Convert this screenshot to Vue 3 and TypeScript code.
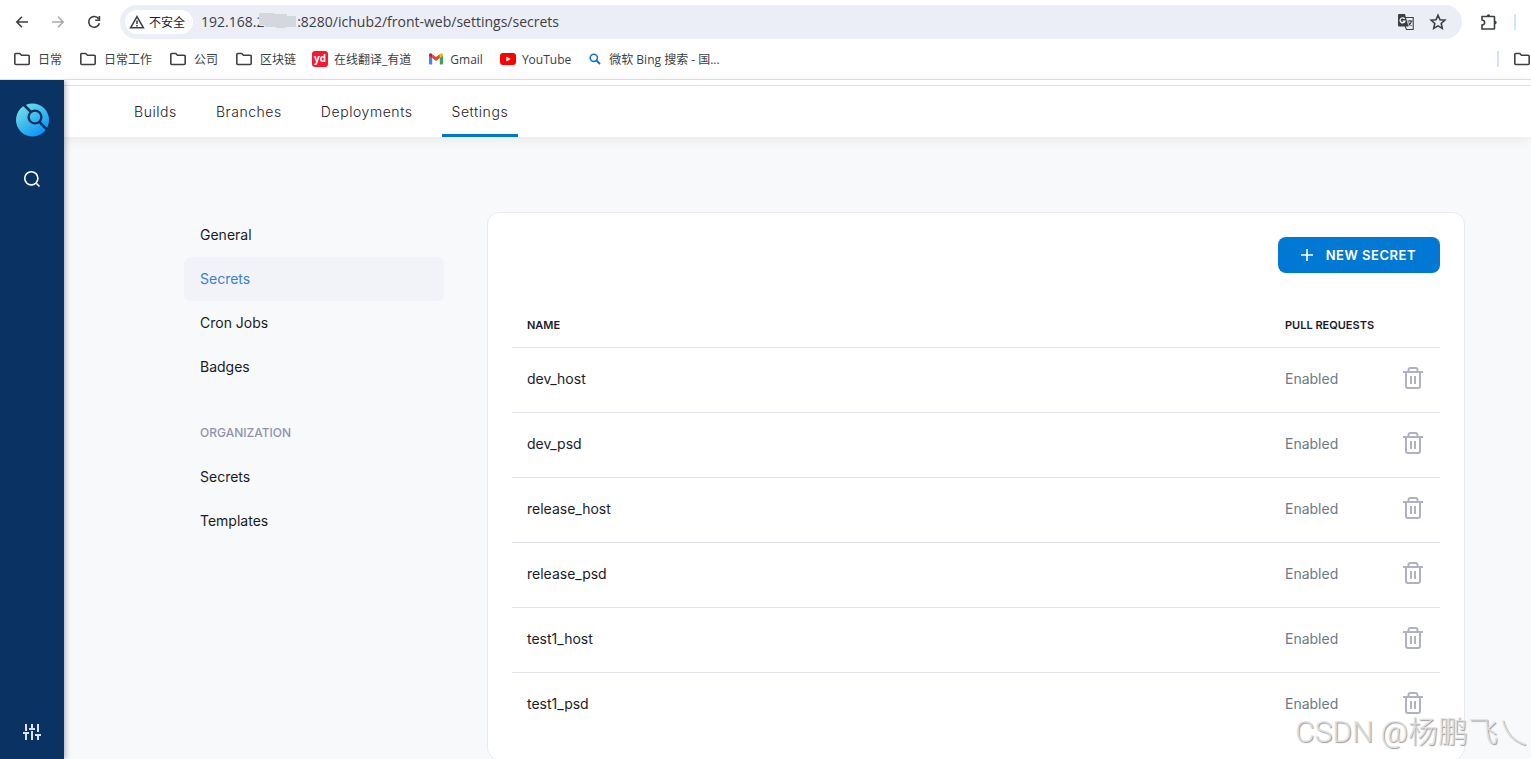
<script setup lang="ts">
import { ref } from 'vue'

interface Bookmark {
  label: string
  icon: 'folder' | 'yd' | 'gmail' | 'youtube' | 'search'
}

const address = ref('192.168.2\u00a0\u00a0\u00a0\u00a0\u00a0\u00a0\u00a0\u00a0\u00a0:8280/ichub2/front-web/settings/secrets')

const bookmarks: Bookmark[] = [
  { label: '日常', icon: 'folder' },
  { label: '日常工作', icon: 'folder' },
  { label: '公司', icon: 'folder' },
  { label: '区块链', icon: 'folder' },
  { label: '在线翻译_有道', icon: 'yd' },
  { label: 'Gmail', icon: 'gmail' },
  { label: 'YouTube', icon: 'youtube' },
  { label: '微软 Bing 搜索 - 国...', icon: 'search' },
]

const tabs = ['Builds', 'Branches', 'Deployments', 'Settings']
const activeTab = ref('Settings')

const repoLinks = ['General', 'Secrets', 'Cron Jobs', 'Badges']
const orgLinks = ['Secrets', 'Templates']
const activeLink = ref('Secrets')

const secrets = ['dev_host', 'dev_psd', 'release_host', 'release_psd', 'test1_host', 'test1_psd']
</script>

<template>
  <div class="window">
    <header class="chrome">
      <div class="toolbar">
        <button class="tool" type="button" aria-label="Back">
          <svg width="16" height="16" viewBox="0 0 16 16"><path d="M14 8H3M8 2.8 2.8 8 8 13.2" /></svg>
        </button>
        <button class="tool dim" type="button" aria-label="Forward">
          <svg width="16" height="16" viewBox="0 0 16 16"><path d="M2 8h11M8 2.8 13.2 8 8 13.2" /></svg>
        </button>
        <button class="tool" type="button" aria-label="Reload">
          <svg width="16" height="16" viewBox="0 0 16 16"><path d="M12.6 4.8A5.4 5.4 0 1 0 13.4 9.2M13.4 2v4.200H9.200" /></svg>
        </button>
        <div class="omnibox">
          <button class="site-chip" type="button">
            <svg width="16" height="14" viewBox="0 0 16 14"><path d="M8 1.700 14.300 12.700H1.700Z" /><path d="M8 5.500v3.500M8 10v1.500" /></svg>
            不安全
          </button>
          <div class="address">
            <input v-model="address" aria-label="Address" type="text" spellcheck="false" />
            <svg class="mask" width="38" height="15" viewBox="0 0 38 15"><path d="M0 0h15v1h13v2h9v11H27v1H17v-1H6v-2H0Z" fill="#d5d7de" /></svg>
          </div>
          <button class="tool small" type="button" aria-label="Translate">
            <svg width="18" height="18" viewBox="0 0 18 18">
              <path d="M8 4.500h8.200v12H9.500L8 13" class="thin" />
              <path d="M2 1h6l3.500 12.500H2a1 1 0 0 1-1-1V2a1 1 0 0 1 1-1Z" class="solid" />
              <path d="M7.600 5.800a2.500 2.500 0 1 0 .3 2.400H5.600" class="light" />
              <path d="M10.500 8h5M13 7v1M14.500 8c-.5 2-1.500 3.500-3 4.500M11.500 9.500l3 3.500" class="thin" />
            </svg>
          </button>
          <button class="tool small" type="button" aria-label="Bookmark this page">
            <svg width="18" height="18" viewBox="0 0 18 18"><path d="m9 2.200 2 4.500 4.900.5-3.700 3.300 1.100 4.900L9 12.900l-4.300 2.500 1.100-4.900L2.100 7.200 7 6.700Z" /></svg>
          </button>
        </div>
        <button class="tool extensions" type="button" aria-label="Extensions">
          <svg width="18" height="18" viewBox="0 0 18 18"><path d="M2 3.500h12a.5.5 0 0 1 .5.5v11.500a.5.5 0 0 1-.5.5H2v-4c3.500-.5 3.500-4.500 0-5Z" /><path d="M6.800 3a1.700 1.700 0 0 1 3.400 0ZM15 7.800a1.700 1.700 0 0 1 0 3.400Z" class="solid" /></svg>
        </button>
        <span class="divider"></span>
      </div>
      <nav class="bookmarks" aria-label="Bookmarks">
        <a v-for="b in bookmarks" :key="b.label" href="#" :class="['bookmark', b.icon]">
          <svg v-if="b.icon === 'folder'" class="folder-icon" width="16" height="14" viewBox="0 0 16 14"><path d="M1.800 1.500h4l1.700 1.700h6.700a1 1 0 0 1 1 1v7.300a1 1 0 0 1-1 1H1.800a1 1 0 0 1-1-1v-9a1 1 0 0 1 1-1Z" /></svg>
          <span v-else-if="b.icon === 'yd'" class="yd-icon">yd</span>
          <svg v-else-if="b.icon === 'gmail'" width="14" height="12" viewBox="0 0 14 12">
            <path d="M0 2v8.500a1 1 0 0 0 1 1h2.200V4.500Z" fill="#4285f4" />
            <path d="M14 2v8.500a1 1 0 0 1-1 1h-2.200V4.500Z" fill="#34a853" />
            <path d="M10.800 1.200V5L14 2.700V1.900c0-1.500-1.600-2-2.600-1.200Z" fill="#fbbc04" />
            <path d="M3.200 1.200 7 4.100l3.800-2.900V5L7 7.900 3.200 5Z" fill="#ea4335" />
            <path d="M3.200 1.200V5L0 2.700V1.900C0 .4 1.600-.1 2.600.7Z" fill="#c5221f" />
          </svg>
          <svg v-else-if="b.icon === 'youtube'" width="16" height="12" viewBox="0 0 16 12"><rect width="16" height="12" rx="3" fill="#f00" /><path d="m6.300 3.400 4.400 2.600-4.400 2.600Z" fill="#fff" /></svg>
          <svg v-else width="12" height="12" viewBox="0 0 12 12"><circle cx="4.800" cy="4.800" r="3.600" fill="none" stroke="#1b74c8" stroke-width="1.600" /><path d="m7.500 7.500 3.500 3.500" stroke="#1b74c8" stroke-width="2" /></svg>
          <span>{{ b.label }}</span>
        </a>
        <span class="divider end"></span>
        <button class="tool all" type="button" aria-label="All bookmarks">
          <svg width="16" height="14" viewBox="0 0 16 14"><path d="M1.800 1.500h4l1.700 1.700h6.700a1 1 0 0 1 1 1v7.300a1 1 0 0 1-1 1H1.800a1 1 0 0 1-1-1v-9a1 1 0 0 1 1-1Z" /></svg>
        </button>
      </nav>
    </header>

    <div class="app">
      <aside class="rail">
        <a href="#" class="logo" aria-label="Home">
          <svg width="34" height="34" viewBox="0 0 34 34">
            <defs>
              <linearGradient id="logo-fill" x1="0.15" y1="0.1" x2="0.75" y2="0.95">
                <stop offset="0" stop-color="#6fdde6" />
                <stop offset="1" stop-color="#0b94f7" />
              </linearGradient>
            </defs>
            <circle cx="17.500" cy="17" r="16.500" fill="url(#logo-fill)" />
            <path d="m8 1 8 8M24.500 19l9 9" stroke="#0a3364" stroke-width="2.600" />
            <circle cx="20" cy="14" r="6.400" fill="none" stroke="#0a3364" stroke-width="2.400" />
          </svg>
        </a>
        <button type="button" aria-label="Search" class="rail-button">
          <svg width="18" height="18" viewBox="0 0 18 18"><circle cx="8.300" cy="8.300" r="6.600" /><path d="m13 13 3.500 3.500" /></svg>
        </button>
        <button type="button" aria-label="Preferences" class="rail-button bottom">
          <svg width="18" height="18" viewBox="0 0 18 18"><path d="M3 1v7M3 11v6M0 10h6M9 1v4M9 8v9M6 6h6M15 1v8M15 12v5M12 12h6" /></svg>
        </button>
      </aside>

      <main class="content">
        <nav class="tabs" aria-label="Repository">
          <a v-for="t in tabs" :key="t" href="#" :class="['tab', { active: t === activeTab }]" @click.prevent="activeTab = t">{{ t }}</a>
        </nav>

        <div class="settings">
          <nav class="side" aria-label="Settings">
            <a v-for="l in repoLinks" :key="l" href="#" :class="['side-link', { active: l === activeLink }]" @click.prevent="activeLink = l">{{ l }}</a>
            <h2>ORGANIZATION</h2>
            <a v-for="l in orgLinks" :key="l" href="#" class="side-link">{{ l }}</a>
          </nav>

          <section class="card">
            <button type="button" class="new-secret">
              <svg width="12" height="12" viewBox="0 0 12 12"><path d="M6 0v12M0 6h12" /></svg>
              NEW SECRET
            </button>
            <table>
              <thead>
                <tr>
                  <th scope="col">NAME</th>
                  <th scope="col" class="pull">PULL REQUESTS</th>
                  <td class="action"></td>
                </tr>
              </thead>
              <tbody>
                <tr v-for="s in secrets" :key="s">
                  <td>{{ s }}</td>
                  <td class="pull">Enabled</td>
                  <td class="action">
                    <button type="button" :aria-label="'Delete ' + s">
                      <svg width="20" height="22" viewBox="0 0 20 22">
                        <path d="M0 5h20M5.500 4.500V3a2 2 0 0 1 2-2h5a2 2 0 0 1 2 2v1.500M3 5v14a2 2 0 0 0 2 2h10a2 2 0 0 0 2-2V5" />
                        <path d="M8 9v8M12 9v8" class="bars" />
                      </svg>
                    </button>
                  </td>
                </tr>
              </tbody>
            </table>
          </section>
        </div>
      </main>
    </div>
    <div class="watermark">CSDN @杨鹏飞乀</div>
  </div>
</template>

<style>
body {
  margin: 0;
}
</style>

<style scoped>
* {
  box-sizing: border-box;
}
.window {
  position: relative;
  display: flex;
  flex-direction: column;
  height: 100vh;
  overflow: hidden;
  background: #fff;
  font-family: Inter, "Noto Sans CJK SC", sans-serif;
}
button {
  border: 0;
  padding: 0;
  background: none;
  font: inherit;
  color: inherit;
  cursor: pointer;
}
a {
  color: inherit;
  text-decoration: none;
}
svg {
  display: block;
  flex: none;
}

/* Browser chrome */
.chrome {
  flex: none;
  border-bottom: 1px solid #dfe1e3;
  color: #3c4043;
  font-family: "Open Sans", "Noto Sans CJK SC", sans-serif;
  font-size: 12px;
}
.toolbar {
  display: flex;
  align-items: center;
  height: 44px;
  padding-left: 14px;
}
.tool {
  flex: none;
  margin-right: 20px;
}
.tool svg,
.site-chip svg,
.folder-icon {
  fill: none;
  stroke: #3c4043;
  stroke-width: 1.6;
}
.tool.dim svg {
  stroke: #a8abae;
}
.tool .solid {
  fill: #3c4043;
  stroke: none;
}
.tool .thin {
  stroke-width: 1.1;
}
.tool .light {
  stroke: #fff;
  stroke-width: 1.2;
}
.omnibox {
  display: flex;
  flex: 1;
  align-items: center;
  height: 34px;
  margin-left: -2px;
  padding: 0 15px 0 5px;
  border-radius: 17px;
  background: #ebeef7;
}
.site-chip {
  display: flex;
  flex: none;
  align-items: center;
  gap: 4px;
  height: 24px;
  padding: 0 8px 0 4px;
  border-radius: 12px;
  background: #fff;
  color: #202124;
}
.address {
  position: relative;
  flex: 1;
  margin-left: 8px;
}
.address input {
  display: block;
  width: 100%;
  height: 24px;
  padding: 0 0 2px;
  border: 0;
  outline: 0;
  background: none;
  color: #3c4043;
  font: 14px "Open Sans", sans-serif;
}
.mask {
  position: absolute;
  left: 58px;
  top: 3px;
}
.tool.small {
  margin: 0 0 0 14px;
}
.tool.extensions {
  margin: 0 16px 0 18px;
}
.divider {
  width: 2px;
  height: 16px;
  margin-right: 15px;
  background: #d3e3fd;
}
.bookmarks {
  display: flex;
  align-items: center;
  height: 35px;
  padding: 0 0 5px 14px;
}
.bookmark {
  display: flex;
  flex: none;
  align-items: center;
  gap: 8px;
  margin-right: 18px;
  white-space: nowrap;
}
.bookmark.yd,
.bookmark.youtube {
  gap: 6px;
  margin-left: -2px;
}
.bookmark.gmail {
  gap: 7px;
  margin-right: 19px;
}
.yd-icon {
  width: 16px;
  height: 16px;
  border-radius: 3px;
  background: #fa1632;
  color: #fff;
  font-size: 10px;
  font-weight: 700;
  line-height: 14px;
  text-align: center;
}
.divider.end {
  margin-left: auto;
}
.tool.all {
  margin-right: 1px;
}

/* Application */
.app {
  display: flex;
  flex: 1;
  min-height: 0;
}
.rail {
  z-index: 1;
  display: flex;
  flex: none;
  flex-direction: column;
  align-items: center;
  width: 64px;
  padding: 23px 0 18px;
  background: #0a3364;
  box-shadow: 1px 0 6px rgba(0, 0, 0, 0.35);
  clip-path: inset(0 -16px 0 0);
}
.rail-button {
  margin-top: 33px;
}
.rail-button.bottom {
  margin-top: auto;
}
.rail-button svg {
  fill: none;
  stroke: #fff;
  stroke-width: 1.6;
}
.rail-button.bottom svg {
  stroke: #dbe2ec;
  stroke-width: 2;
}
.content {
  flex: 1;
  min-width: 0;
  background: #f8f9fb;
}
.tabs {
  display: flex;
  gap: 19px;
  height: 57px;
  padding-left: 60px;
  background: linear-gradient(#fff 5px, #dfe1e3 5px, #dfe1e3 6px, #fff 6px);
  box-shadow: 0 2px 12px rgba(0, 0, 0, 0.08);
}
.tab {
  padding: 6px 10px 0;
  border-bottom: 3px solid transparent;
  color: #22222a;
  font-size: 14px;
  font-weight: 300;
  line-height: 52px;
  letter-spacing: 0.04em;
}
.tab.active {
  border-bottom-color: #0278d5;
  border-radius: 2px 2px 0 0;
}
.settings {
  display: flex;
  align-items: flex-start;
  gap: 43px;
  padding: 75px 66px 0 120px;
}
.side {
  flex: none;
  width: 260px;
  padding-top: 1px;
  color: #1b1b1f;
  font-size: 14px;
}
.side-link {
  display: block;
  padding: 0 16px;
  border-radius: 6px;
  line-height: 44px;
}
.side-link.active {
  background: #f2f3f9;
  color: #3a7fd5;
}
.side h2 {
  margin: 22px 0 0;
  padding: 0 16px;
  color: #9293ab;
  font-size: 12px;
  font-weight: 500;
  line-height: 44px;
}
.card {
  display: flex;
  flex: 1;
  flex-direction: column;
  min-width: 0;
  padding: 24px 24px 22px;
  border: 1px solid #e9eaee;
  border-radius: 12px;
  background: #fff;
}
.new-secret {
  display: flex;
  align-items: center;
  align-self: flex-end;
  gap: 13px;
  height: 36px;
  padding: 0 24px 0 23px;
  border-radius: 8px;
  background: #0278d5;
  color: #fff;
  font-size: 13px;
  font-weight: 600;
  letter-spacing: 0.04em;
}
.new-secret svg {
  stroke: #fff;
  stroke-width: 1.6;
}
table {
  width: 100%;
  margin-top: 29px;
  border-collapse: collapse;
  table-layout: fixed;
  font-size: 14px;
}
tr {
  height: 65px;
  border-bottom: 1px solid #e2e3e8;
}
thead tr {
  height: 45px;
}
tbody tr:last-child {
  border-bottom: 0;
}
th,
td {
  padding: 0 15px 2px;
  color: #1b1b28;
  text-align: left;
}
th {
  padding-top: 2px;
  padding-bottom: 0;
  font-size: 11px;
  font-weight: 600;
}
.pull {
  width: 121px;
  padding-right: 0;
  white-space: nowrap;
}
td.pull {
  color: #6b7a88;
}
.action {
  width: 49px;
  padding: 0 0 4px;
}
.action button {
  display: block;
  margin-left: 12px;
}
.action svg {
  fill: none;
  stroke: #b0b1c4;
  stroke-width: 2;
}
.action .bars {
  stroke-width: 2;
}

.watermark {
  position: absolute;
  right: 3px;
  bottom: 5px;
  color: rgba(225, 226, 228, 0.9);
  font: 300 30px "Roboto", "Noto Sans CJK SC", sans-serif;
  line-height: 44px;
  text-shadow: 1px 1px 1px #999;
  pointer-events: none;
}
</style>
